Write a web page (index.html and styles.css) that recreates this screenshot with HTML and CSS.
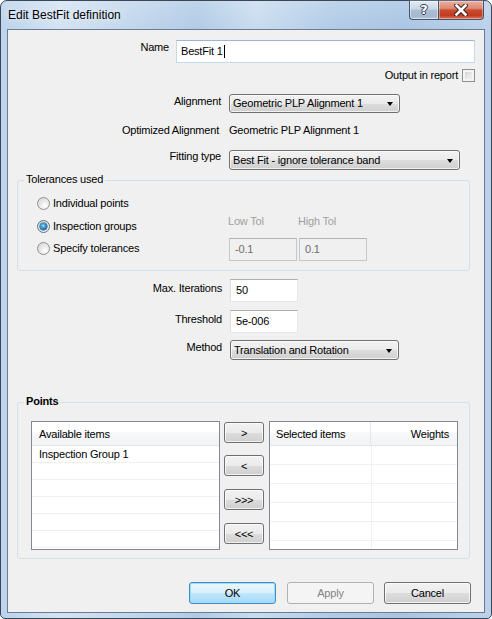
FILE: index.html
```html
<!DOCTYPE html>
<html>
<head>
<meta charset="utf-8">
<title>Edit BestFit definition</title>
<link rel="stylesheet" href="styles.css">
</head>
<body>
<div class="window">
  <div class="titlebar">
    <span class="title">Edit BestFit definition</span>
    <div class="caption-buttons">
      <div class="cbtn help"><span class="qmark">?</span></div>
      <div class="cbtn close">
        <svg width="14" height="12" viewBox="0 0 14 12">
          <path d="M2.5 1.5 L11.5 10.5 M11.5 1.5 L2.5 10.5" stroke="#3a2420" stroke-width="4.6" stroke-linecap="square" fill="none"/>
          <path d="M2.5 1.5 L11.5 10.5 M11.5 1.5 L2.5 10.5" stroke="#ffffff" stroke-width="2.6" stroke-linecap="square" fill="none"/>
        </svg>
      </div>
    </div>
  </div>
  <div class="client">
    <div class="row r-name">
      <span class="lbl w161">Name</span>
      <div class="textbox focused name-box"><span>BestFit 1</span><span class="caret"></span></div>
    </div>
    <div class="row r-output">
      <span class="out-text">Output in report</span>
      <span class="checkbox"></span>
    </div>
    <div class="row r-align">
      <span class="lbl w213">Alignment</span>
      <div class="combo align-combo"><span class="combo-text">Geometric PLP Alignment 1</span><span class="arrow"></span></div>
    </div>
    <div class="row r-opt">
      <span class="lbl w211">Optimized Alignment</span>
      <span class="value">Geometric PLP Alignment 1</span>
    </div>
    <div class="row r-fit">
      <span class="lbl w213 lh12">Fitting type</span>
      <div class="combo fit-combo"><span class="combo-text">Best Fit - ignore tolerance band</span><span class="arrow"></span></div>
    </div>

    <div class="group tol-group">
      <div class="group-title">Tolerances used</div>
      <div class="tol-body">
        <div class="radios">
          <div class="radio-row"><span class="radio"></span><span class="radio-text">Individual points</span></div>
          <div class="radio-row r2"><span class="radio checked"><span class="dot"></span></span><span class="radio-text">Inspection groups</span></div>
          <div class="radio-row r3"><span class="radio"></span><span class="radio-text">Specify tolerances</span></div>
        </div>
        <div class="tol-fields">
          <span class="tol-label">Low Tol</span>
          <span class="tol-label">High Tol</span>
          <div class="textbox disabled tol-box">-0.1</div>
          <div class="textbox disabled tol-box">0.1</div>
        </div>
      </div>
    </div>

    <div class="row r-iter">
      <span class="lbl w214 mt3">Max. Iterations</span>
      <div class="textbox num-box">50</div>
    </div>
    <div class="row r-thr">
      <span class="lbl w214 mt3">Threshold</span>
      <div class="textbox num-box">5e-006</div>
    </div>
    <div class="row r-method">
      <span class="lbl w214">Method</span>
      <div class="combo method-combo"><span class="combo-text">Translation and Rotation</span><span class="arrow"></span></div>
    </div>

    <div class="group points-group">
      <div class="group-title bold">Points</div>
      <div class="points-body">
        <div class="listview">
          <div class="lv-header"><div class="lv-hcol">Available items</div></div>
          <div class="lv-row avail-row"><div class="lv-cell">Inspection Group 1</div></div>
          <div class="lv-row avail-row"></div>
          <div class="lv-row avail-row"></div>
          <div class="lv-row avail-row"></div>
          <div class="lv-row avail-row"></div>
          <div class="lv-row avail-row"></div>
        </div>
        <div class="move-buttons">
          <div class="btn move-btn">&gt;</div>
          <div class="btn move-btn m2">&lt;</div>
          <div class="btn move-btn m3">&gt;&gt;&gt;</div>
          <div class="btn move-btn m3">&lt;&lt;&lt;</div>
        </div>
        <div class="listview sel-list">
          <div class="lv-header">
            <div class="lv-hcol sel-col">Selected items</div>
            <div class="lv-hcol w-col">Weights</div>
          </div>
          <div class="lv-row sel-row"><div class="sel-cell"></div><div class="w-cell"></div></div>
          <div class="lv-row sel-row"><div class="sel-cell"></div><div class="w-cell"></div></div>
          <div class="lv-row sel-row"><div class="sel-cell"></div><div class="w-cell"></div></div>
          <div class="lv-row sel-row"><div class="sel-cell"></div><div class="w-cell"></div></div>
          <div class="lv-row sel-row"><div class="sel-cell"></div><div class="w-cell"></div></div>
          <div class="lv-row sel-row"><div class="sel-cell"></div><div class="w-cell"></div></div>
        </div>
      </div>
    </div>

    <div class="dialog-buttons">
      <div class="btn dlg-btn default">OK</div>
      <div class="btn dlg-btn disabled-btn apply">Apply</div>
      <div class="btn dlg-btn cancel">Cancel</div>
    </div>
  </div>
</div>
</body>
</html>
```

FILE: styles.css
```css
* { box-sizing: border-box; }
html, body { margin: 0; padding: 0; }
body {
  width: 492px;
  height: 619px;
  overflow: hidden;
  background: #ffffff;
  font-family: "Liberation Sans", Arial, sans-serif;
  font-size: 11px;
  letter-spacing: -0.2px;
  color: #000;
}

/* ---------- window frame ---------- */
.window {
  width: 492px;
  height: 619px;
  border: 1px solid #3a4759;
  border-radius: 7px 7px 5px 5px;
  padding: 0 6px 5px 6px;
  display: flex;
  flex-direction: column;
  background:
    linear-gradient(to bottom, rgba(255,255,255,0.18), rgba(255,255,255,0) 28px),
    linear-gradient(to right, #bcd3eb 0%, #d3e3f3 12%, #c4d8ed 25%, #b1cbe6 40%, #c9dcef 52%, #b0cbe7 68%, #a9c5e3 82%, #bcd2ea 100%);
}

.titlebar {
  height: 28px;
  display: flex;
  align-items: flex-start;
}
.title {
  margin: 7px 0 0 1px;
  font-size: 12px;
  line-height: 15px;
  letter-spacing: 0;
  color: #000;
  text-shadow: 0 0 5px rgba(255,255,255,0.9);
}
.caption-buttons {
  margin-left: auto;
  margin-right: 1px;
  margin-top: -1px;
  display: flex;
}
.cbtn {
  height: 20px;
  border: 1px solid #46546a;
  border-top-color: #5b6a80;
  display: flex;
  align-items: center;
  justify-content: center;
}
.help {
  width: 29px;
  border-right: none;
  border-radius: 0 0 0 4px;
  background: linear-gradient(to bottom, #e4ebf3 0%, #c9d6e4 45%, #aebfd3 50%, #a5b8ce 85%, #bccbdc 100%);
  box-shadow: inset 0 0 0 1px rgba(255,255,255,0.45);
}
.qmark {
  font-family: "DejaVu Sans", sans-serif;
  font-weight: bold;
  font-size: 13px;
  line-height: 13px;
  color: #fff;
  letter-spacing: 0;
  text-shadow: 1px 0 0 #2e3d52, -1px 0 0 #2e3d52, 0 1px 0 #2e3d52, 0 -1px 0 #2e3d52;
  margin-top: -1px;
}
.close {
  width: 46px;
  border-radius: 0 0 4px 0;
  background: linear-gradient(to bottom, #eab0a2 0%, #df8a75 40%, #c94a2f 52%, #c33a1e 80%, #dd7a5c 100%);
  box-shadow: inset 0 0 0 1px rgba(255,255,255,0.35);
}
.close svg { display: block; margin-top: -1px; }

.client {
  height: 584px;
  border: 1px solid #6d7d91;
  background: #f0f0f0;
  display: flex;
  flex-direction: column;
}

/* ---------- generic rows ---------- */
.row {
  display: flex;
  align-items: flex-start;
  flex-shrink: 0;
}
.lbl {
  text-align: right;
  line-height: 14px;
  white-space: nowrap;
  flex-shrink: 0;
}
.w161 { width: 161px; margin-right: 7px; }
.w211 { width: 211px; margin-right: 10px; }
.w213 { width: 213px; margin-right: 8px; }
.w214 { width: 214px; margin-right: 8px; }
.lh12 { line-height: 12px; }
.mt3 { margin-top: 3px; line-height: 13px; }

.r-name { margin-top: 10px; height: 23px; }
.r-output {
  margin-top: 6px;
  height: 13px;
  justify-content: flex-end;
  align-items: center;
  padding-right: 9px;
}
.out-text { line-height: 13px; margin-right: 4px; }
.r-align { margin-top: 12px; height: 19px; }
.r-opt { margin-top: 11px; height: 13px; }
.r-opt .lbl, .value { line-height: 13px; }
.r-fit { margin-top: 13px; height: 20px; }
.r-iter { margin-top: 8px; height: 23px; }
.r-thr { margin-top: 8px; height: 23px; }
.r-method { margin-top: 7px; height: 20px; }

/* ---------- text boxes ---------- */
.textbox {
  background: #fff;
  border: 1px solid #dbdfe6;
  border-top-color: #abadb3;
  border-bottom-color: #e3e9ef;
  border-right-color: #e3e9ef;
  display: flex;
  align-items: center;
  padding-left: 5px;
  white-space: nowrap;
  line-height: 13px;
}
.textbox.focused {
  border-color: #c5daed;
  border-top-color: #98b7da;
  padding-left: 4px;
}
.name-box { width: 299px; height: 23px; }
.caret {
  display: inline-block;
  width: 1px;
  height: 13px;
  background: #000;
  margin-left: 1px;
}
.num-box { width: 68px; height: 23px; }
.textbox.disabled {
  background: #f0f0f0;
  border-color: #c5c8cb;
  border-top-color: #adb2b5;
  color: #6d6d6d;
}

/* ---------- checkbox / radios ---------- */
.checkbox {
  width: 13px;
  height: 13px;
  border: 1px solid #8e8f8f;
  background: linear-gradient(135deg, #cbcdcf 0%, #e9eaeb 60%, #f7f7f7 100%);
  box-shadow: inset 0 0 0 2px #f4f4f4;
  flex-shrink: 0;
}
.radio {
  width: 13px;
  height: 13px;
  border-radius: 50%;
  border: 1px solid #8f9194;
  background: radial-gradient(circle at 65% 70%, #ffffff 0%, #eeeeee 35%, #cfcfcf 100%);
  display: flex;
  align-items: center;
  justify-content: center;
  flex-shrink: 0;
}
.radio.checked { border-color: #5a7489; }
.dot {
  width: 7px;
  height: 7px;
  border-radius: 50%;
  background: radial-gradient(circle at 45% 40%, #a9e1fb 0%, #3e9fda 35%, #1a5f97 75%, #12476f 100%);
  box-shadow: 0 0 0 0.5px #16486e;
}

/* ---------- combos & buttons ---------- */
.combo, .btn {
  border: 1px solid #707070;
  border-radius: 3px;
  background: linear-gradient(to bottom, #f2f2f2 0%, #ebebeb 50%, #dddddd 51%, #cfcfcf 100%);
  box-shadow: inset 0 0 0 1px rgba(255,255,255,0.7);
}
.combo {
  display: flex;
  align-items: center;
  padding-left: 3px;
  padding-right: 6px;
  white-space: nowrap;
  flex-shrink: 0;
}
.combo-text { line-height: 13px; }
.arrow {
  margin-left: auto;
  width: 0;
  height: 0;
  border-left: 3.5px solid transparent;
  border-right: 3.5px solid transparent;
  border-top: 4px solid #000;
  margin-top: 1px;
}
.align-combo { width: 171px; height: 19px; }
.fit-combo { width: 231px; height: 20px; }
.method-combo { width: 169px; height: 20px; }

.btn {
  display: flex;
  align-items: center;
  justify-content: center;
  white-space: nowrap;
  flex-shrink: 0;
}

/* ---------- group boxes ---------- */
.group {
  border: 1px solid #d5dfe5;
  border-radius: 3px;
  margin-left: 9px;
  width: 453px;
  flex-shrink: 0;
}
.group-title {
  width: fit-content;
  margin: -8px 0 0 6px;
  padding: 0 2px;
  height: 13px;
  line-height: 13px;
  background: #f0f0f0;
}
.group-title.bold { font-weight: bold; }

.tol-group { margin-top: 10px; height: 91px; }
.tol-body { display: flex; }
.radios {
  width: 211px;
  padding-left: 19px;
  padding-top: 11px;
  display: flex;
  flex-direction: column;
}
.radio-row {
  display: flex;
  align-items: center;
  height: 13px;
}
.radio-row.r2 { margin-top: 10px; }
.radio-row.r3 { margin-top: 9px; }
.radio-text { margin-left: 3px; line-height: 13px; }
.tol-fields {
  padding-top: 29px;
  display: grid;
  grid-template-columns: 68px 68px;
  column-gap: 2px;
  row-gap: 10px;
}
.tol-label {
  color: #a0a0a0;
  line-height: 13px;
  margin-left: -1px;
}
.tol-box { height: 23px; }

.points-group { margin-top: 42px; height: 157px; }
.points-body {
  display: flex;
  padding-top: 13px;
  padding-left: 13px;
}

/* ---------- list views ---------- */
.listview {
  width: 189px;
  height: 129px;
  border: 1px solid #828790;
  background: #fff;
  overflow: hidden;
  flex-shrink: 0;
}
.lv-header {
  height: 24px;
  display: flex;
  border-bottom: 1px solid #e2e3e5;
  background: linear-gradient(to bottom, #ffffff 0%, #ffffff 45%, #f7f8f9 46%, #f2f3f5 100%);
}
.lv-hcol {
  flex: 1;
  padding-left: 7px;
  display: flex;
  align-items: center;
  line-height: 13px;
  padding-top: 1px;
}
.lv-row {
  border-bottom: 1px solid #f0f0f0;
}
.avail-row { height: 17px; }
.lv-cell {
  padding-left: 7px;
  line-height: 16px;
}

.move-buttons {
  margin-left: 4px;
  padding-top: 1px;
  display: flex;
  flex-direction: column;
}
.move-btn { width: 40px; height: 21px; }
.move-btn.m2 { margin-top: 12px; }
.move-btn.m3 { margin-top: 13px; }

.sel-list { margin-left: 5px; }
.sel-col {
  flex: 0 0 101px;
  padding-left: 6px;
  border-right: 1px solid #e3e8ee;
}
.w-col {
  flex: 1;
  justify-content: flex-end;
  padding-right: 8px;
}
.sel-row { height: 19px; display: flex; }
.sel-cell { width: 102px; height: 100%; border-right: 1px solid #f0f0f0; }
.w-cell { flex: 1; }

/* ---------- dialog buttons ---------- */
.dialog-buttons {
  margin-top: 23px;
  display: flex;
  justify-content: flex-end;
  padding-right: 13px;
  flex-shrink: 0;
}
.dlg-btn { width: 87px; height: 22px; }
.dlg-btn.default {
  border-color: #3c8fc6;
  background: linear-gradient(to bottom, #eaf6fd 0%, #d9f0fc 50%, #bee6fd 51%, #a7d9f5 100%);
  box-shadow: inset 0 0 0 1px #9fdcf8;
}
.dlg-btn.apply { margin-left: 11px; }
.dlg-btn.cancel { margin-left: 10px; }
.disabled-btn {
  border-color: #adb2b5;
  background: #f4f4f4;
  box-shadow: none;
  color: #838383;
}
```
